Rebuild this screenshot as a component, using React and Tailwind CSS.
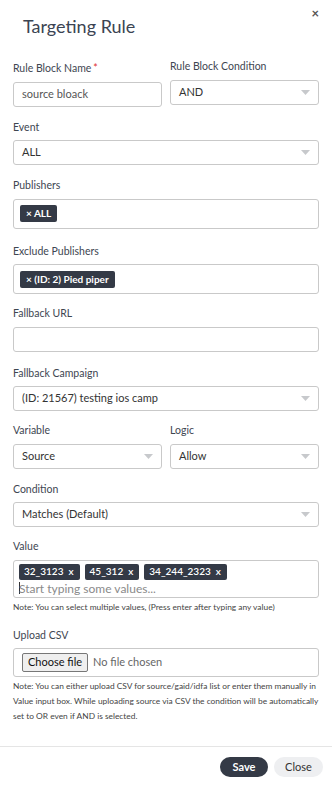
import React from "react";

const Label = ({ children, required }) => (
  <label className="block text-[10.5px] text-[#3e4651] leading-none mb-[8px]">
    {children}
    {required && <span className="text-[#e03131] ml-[2px] align-top">*</span>}
  </label>
);

const Caret = () => (
  <svg width="9" height="5" viewBox="0 0 9 5" className="shrink-0">
    <path d="M0 0h9L4.5 5z" fill="#c7c9cc" />
  </svg>
);

const Select = ({ value }) => (
  <div className="h-[25px] border border-[#c9c9c9] rounded-[3px] flex items-center justify-between pl-[8px] pr-[8px] text-[11px] text-[#333]">
    <span>{value}</span>
    <Caret />
  </div>
);

const Tag = ({ children }) => (
  <span className="inline-flex items-center h-[17px] px-[6px] rounded-[2px] bg-[#343a46] text-white text-[10px] font-bold">
    {children}
  </span>
);

const ValueTag = ({ children }) => (
  <span className="inline-flex items-center h-[16px] pl-[5px] pr-[6px] rounded-[2px] bg-[#343a46] text-white text-[10px] font-semibold gap-[5px]">
    {children}
    <span>x</span>
  </span>
);

export default function App() {
  return (
    <div
      className="w-[332px] h-[785px] bg-white relative overflow-hidden"
      style={{ fontFamily: "Lato, 'Open Sans', sans-serif" }}
    >
      <button className="absolute top-[7px] right-[13px] text-[#555] text-[13px] font-bold leading-none">
        ×
      </button>
      <div className="px-[23px] pt-[15px] h-[63px]">
        <h2 className="text-[18px] text-[#3b4452] leading-[22px]">
          Targeting Rule
        </h2>
      </div>

      <div className="px-[13px]">
        <div className="grid grid-cols-2 gap-x-[8px]">
          <div>
            <Label required>Rule Block Name</Label>
            <div className="h-[25px] border border-[#c9c9c9] rounded-[3px] flex items-center pl-[8px] text-[11px] text-[#555]">
              source bloack
            </div>
          </div>
          <div className="-mt-[2px]">
            <Label>Rule Block Condition</Label>
            <Select value="AND" />
          </div>
        </div>

        <div className="mt-[15px]">
          <Label>Event</Label>
          <Select value="ALL" />
        </div>

        <div className="mt-[15px]">
          <Label>Publishers</Label>
          <div className="h-[30px] border border-[#c9c9c9] rounded-[3px] flex items-center px-[6px]">
            <Tag>× ALL</Tag>
          </div>
        </div>

        <div className="mt-[17px]">
          <Label>Exclude Publishers</Label>
          <div className="h-[30px] border border-[#c9c9c9] rounded-[3px] flex items-center px-[6px]">
            <Tag>× (ID: 2) Pied piper</Tag>
          </div>
        </div>

        <div className="mt-[14px]">
          <Label>Fallback URL</Label>
          <div className="h-[25px] border border-[#c9c9c9] rounded-[3px]" />
        </div>

        <div className="mt-[16px]">
          <Label>Fallback Campaign</Label>
          <Select value="(ID: 21567) testing ios camp" />
        </div>

        <div className="grid grid-cols-2 gap-x-[8px] mt-[14px]">
          <div>
            <Label>Variable</Label>
            <Select value="Source" />
          </div>
          <div>
            <Label>Logic</Label>
            <Select value="Allow" />
          </div>
        </div>

        <div className="mt-[15px]">
          <Label>Condition</Label>
          <Select value="Matches (Default)" />
        </div>

        <div className="mt-[14px]">
          <Label>Value</Label>
          <div className="h-[38px] border border-[#c9c9c9] rounded-[3px] px-[5px] pt-[3px]">
            <div className="flex gap-[5px]">
              <ValueTag>32_3123</ValueTag>
              <ValueTag>45_312</ValueTag>
              <ValueTag>34_244_2323</ValueTag>
            </div>
            <div className="text-[12px] text-[#8a8a8a] leading-[15px] mt-[1px] flex items-center">
              <span className="w-px h-[12px] bg-[#333] mr-[-1px]" />
              Start typing some values...
            </div>
          </div>
          <p className="text-[8.4px] text-[#444] mt-[4px] leading-[10px]">
            Note: You can select multiple values, (Press enter after typing any value)
          </p>
        </div>

        <div className="mt-[18px]">
          <Label>Upload CSV</Label>
          <div className="h-[29px] border border-[#c9c9c9] rounded-[3px] flex items-center px-[8px] text-[11px]">
            <span className="border border-[#777] bg-[#efefef] rounded-[2px] px-[5px] h-[19px] flex items-center text-[#111] text-[11px]">
              Choose file
            </span>
            <span className="ml-[5px] text-[#666]">No file chosen</span>
          </div>
          <p className="text-[8.4px] text-[#444] mt-[2px] leading-[15px]">
            Note: You can either upload CSV for source/gaid/idfa list or enter
            them manually in Value input box. While uploading source via CSV the
            condition will be automatically set to OR even if AND is selected.
          </p>
        </div>
      </div>

      <div className="absolute left-0 right-0 top-[746px] border-t border-[#e5e5e5]" />
      <div className="absolute top-[757px] right-[9px] flex gap-[6px]">
        <button className="h-[20px] w-[48px] rounded-full bg-[#343a46] text-white text-[11px] font-bold">
          Save
        </button>
        <button className="h-[20px] w-[49px] rounded-full bg-[#eeeff1] text-[#333] text-[11px]">
          Close
        </button>
      </div>
    </div>
  );
}
